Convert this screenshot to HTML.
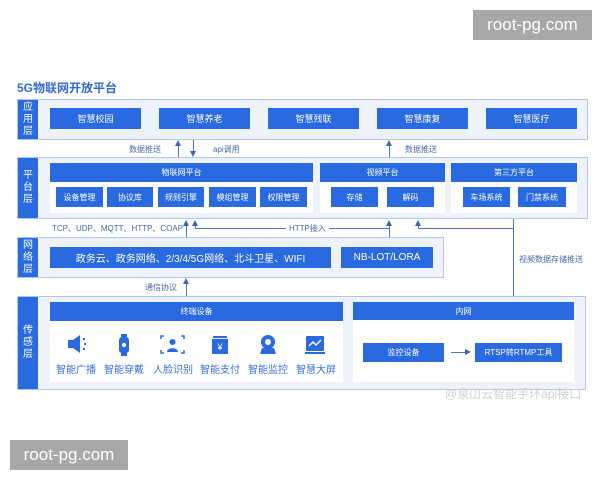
<!DOCTYPE html>
<html><head><meta charset="utf-8"><style>
*{margin:0;padding:0;box-sizing:border-box}
body{width:600px;height:480px;background:#fff;position:relative;overflow:hidden;font-family:"Liberation Sans","Noto Sans CJK SC",sans-serif}
.a{position:absolute}
.layer{position:absolute;background:#eef3fb;border:1px solid #b4c6e6}
.lab{position:absolute;left:0;top:0;bottom:0;width:20px;background:#2a6ae0;color:#fff;font-size:10px;line-height:12px;display:flex;align-items:center;justify-content:center;text-align:center}
.b{position:absolute;background:#2a6ae0;color:#fff;font-size:9px;display:flex;align-items:center;justify-content:center;white-space:nowrap}
.w{position:absolute;background:#fff}
.t{position:absolute;font-size:8px;color:#4a6aa8;white-space:nowrap}
.ln{position:absolute;background:#4f74b8}
.up{position:absolute;width:0;height:0;border-left:3.5px solid transparent;border-right:3.5px solid transparent;border-bottom:6px solid #3b66b8}
.dn{position:absolute;width:0;height:0;border-left:3.5px solid transparent;border-right:3.5px solid transparent;border-top:6px solid #3b66b8}
.ic{position:absolute;color:#3a6fd8;font-size:10px;text-align:center;width:48px}
.badge{position:absolute;background:#a8a8a8;color:#fff;font-size:17px;display:flex;align-items:center;justify-content:center}
</style></head><body>
<div class="badge" style="left:473px;top:10px;width:119px;height:30px">root-pg.com</div>
<div class="badge" style="left:10px;top:440px;width:118px;height:30px">root-pg.com</div>
<div class="a" style="left:17px;top:79px;font-size:12px;font-weight:bold;color:#2f6bd0">5G物联网开放平台</div>

<div class="layer" style="left:17px;top:99px;width:571px;height:41px"><div class="lab">应<br>用<br>层</div></div>
<div class="b" style="left:50px;top:108px;width:91px;height:21px">智慧校园</div>
<div class="b" style="left:159px;top:108px;width:91px;height:21px">智慧养老</div>
<div class="b" style="left:268px;top:108px;width:91px;height:21px">智慧残联</div>
<div class="b" style="left:377px;top:108px;width:91px;height:21px">智慧康复</div>
<div class="b" style="left:486px;top:108px;width:91px;height:21px">智慧医疗</div>

<div class="t" style="left:129px;top:144px">数据推送</div>
<div class="ln" style="left:178px;top:146px;width:1px;height:11px"></div><div class="up" style="left:175px;top:140px"></div>
<div class="ln" style="left:193px;top:140px;width:1px;height:11px"></div><div class="dn" style="left:190px;top:151px"></div>
<div class="t" style="left:213px;top:144px">api调用</div>
<div class="ln" style="left:389px;top:146px;width:1px;height:11px"></div><div class="up" style="left:386px;top:140px"></div>
<div class="t" style="left:405px;top:144px">数据推送</div>

<div class="layer" style="left:17px;top:157px;width:571px;height:62px"><div class="lab">平<br>台<br>层</div></div>
<div class="w" style="left:50px;top:163px;width:263px;height:50px"></div>
<div class="b" style="left:50px;top:163px;width:263px;height:19px;font-size:8px">物联网平台</div>
<div class="b" style="left:56px;top:187px;width:47px;height:20px;font-size:8px">设备管理</div>
<div class="b" style="left:107px;top:187px;width:46px;height:20px;font-size:8px">协议库</div>
<div class="b" style="left:158px;top:187px;width:46px;height:20px;font-size:8px">规则引擎</div>
<div class="b" style="left:209px;top:187px;width:47px;height:20px;font-size:8px">模组管理</div>
<div class="b" style="left:260px;top:187px;width:47px;height:20px;font-size:8px">权限管理</div>
<div class="w" style="left:320px;top:163px;width:125px;height:50px"></div>
<div class="b" style="left:320px;top:163px;width:125px;height:19px;font-size:8px">视频平台</div>
<div class="b" style="left:331px;top:187px;width:47px;height:20px;font-size:8px">存储</div>
<div class="b" style="left:387px;top:187px;width:47px;height:20px;font-size:8px">解码</div>
<div class="w" style="left:451px;top:163px;width:126px;height:50px"></div>
<div class="b" style="left:451px;top:163px;width:126px;height:19px;font-size:8px">第三方平台</div>
<div class="b" style="left:463px;top:187px;width:47px;height:20px;font-size:8px">车场系统</div>
<div class="b" style="left:518px;top:187px;width:48px;height:20px;font-size:8px">门禁系统</div>

<div class="t" style="left:52px;top:223px">TCP、UDP、MQTT、HTTP、COAP</div>
<div class="ln" style="left:186px;top:225px;width:1px;height:13px"></div><div class="up" style="left:183px;top:220px"></div>
<div class="ln" style="left:195px;top:225px;width:1px;height:4px"></div><div class="up" style="left:192px;top:220px"></div>
<div class="ln" style="left:195px;top:228px;width:194px;height:1px"></div>
<div class="t" style="left:286px;top:223px;background:#fff;padding:0 3px">HTTP接入</div>
<div class="ln" style="left:389px;top:225px;width:1px;height:13px"></div><div class="up" style="left:386px;top:220px"></div>
<div class="ln" style="left:418px;top:225px;width:1px;height:4px"></div><div class="up" style="left:415px;top:220px"></div>
<div class="ln" style="left:418px;top:228px;width:96px;height:1px"></div>
<div class="ln" style="left:513px;top:219px;width:1px;height:78px"></div>
<div class="t" style="left:519px;top:254px">视频数据存储推送</div>

<div class="layer" style="left:17px;top:237px;width:427px;height:41px"><div class="lab">网<br>络<br>层</div></div>
<div class="b" style="left:50px;top:247px;width:281px;height:21px;font-size:10px">政务云、政务网络、2/3/4/5G网络、北斗卫星、WIFI</div>
<div class="b" style="left:341px;top:247px;width:92px;height:21px;font-size:10px">NB-LOT/LORA</div>

<div class="t" style="left:145px;top:282px">通信协议</div>
<div class="ln" style="left:186px;top:283px;width:1px;height:14px"></div><div class="up" style="left:183px;top:278px"></div>

<div class="layer" style="left:17px;top:296px;width:569px;height:94px"><div class="lab">传<br>感<br>层</div></div>
<div class="w" style="left:50px;top:302px;width:293px;height:80px"></div>
<div class="b" style="left:50px;top:302px;width:293px;height:19px;font-size:8px">终端设备</div>
<div class="w" style="left:353px;top:302px;width:221px;height:80px"></div>
<div class="b" style="left:353px;top:302px;width:221px;height:18px;font-size:8px">内网</div>
<div class="b" style="left:363px;top:343px;width:81px;height:19px;font-size:8px">监控设备</div>
<div class="ln" style="left:451px;top:352px;width:15px;height:1px"></div>
<div style="position:absolute;left:465px;top:349px;width:0;height:0;border-top:3.5px solid transparent;border-bottom:3.5px solid transparent;border-left:6px solid #3b66b8"></div>
<div class="b" style="left:475px;top:343px;width:87px;height:19px;font-size:8px">RTSP转RTMP工具</div>

<svg class="a" style="left:52px;top:334px" width="290" height="24" viewBox="0 0 290 24">
 <g fill="#2a6ae0">
  <rect x="16" y="6" width="5" height="8"/><polygon points="21,6 28,1 28,19 21,14"/>
  <rect x="31" y="4" width="2" height="2"/><rect x="32" y="9" width="2" height="2"/><rect x="31" y="14" width="2" height="2"/>
  <rect x="67" y="3" width="10" height="16" rx="3"/><rect x="69" y="0" width="6" height="3"/><rect x="69" y="19" width="6" height="3"/>
  <circle cx="72" cy="11" r="2.2" fill="#fff"/>
  <path d="M112 2h-3v3M129 2h3v3M112 19h-3v-3M129 19h3v-3" stroke="#2a6ae0" stroke-width="1.5" fill="none"/>
  <circle cx="120.5" cy="8" r="3"/><path d="M115 18c0-5 11-5 11 0z"/>
  <rect x="161" y="2" width="14" height="2"/><rect x="160" y="5" width="16" height="15"/>
  <text x="168" y="16" font-size="9" fill="#fff" text-anchor="middle" font-family="Liberation Sans">¥</text>
  <circle cx="216" cy="8" r="7"/><circle cx="216" cy="8" r="3" fill="#fff"/><path d="M210 14h12l2 6h-16z"/>
  <rect x="254" y="2" width="18" height="15" rx="1"/><rect x="253" y="18" width="20" height="2"/>
  <path d="M257 12l4-4 3 3 5-5" stroke="#fff" stroke-width="1.5" fill="none"/>
 </g>
</svg>
<div class="ic" style="left:52px;top:361px">智能广播</div>
<div class="ic" style="left:100px;top:361px">智能穿戴</div>
<div class="ic" style="left:149px;top:361px">人脸识别</div>
<div class="ic" style="left:196px;top:361px">智能支付</div>
<div class="ic" style="left:244px;top:361px">智能监控</div>
<div class="ic" style="left:292px;top:361px">智慧大屏</div>

<div class="a" style="left:445px;top:385px;font-size:12px;color:#d0d0d0;white-space:nowrap">@泉山云智能手环api接口</div>
</body></html>
